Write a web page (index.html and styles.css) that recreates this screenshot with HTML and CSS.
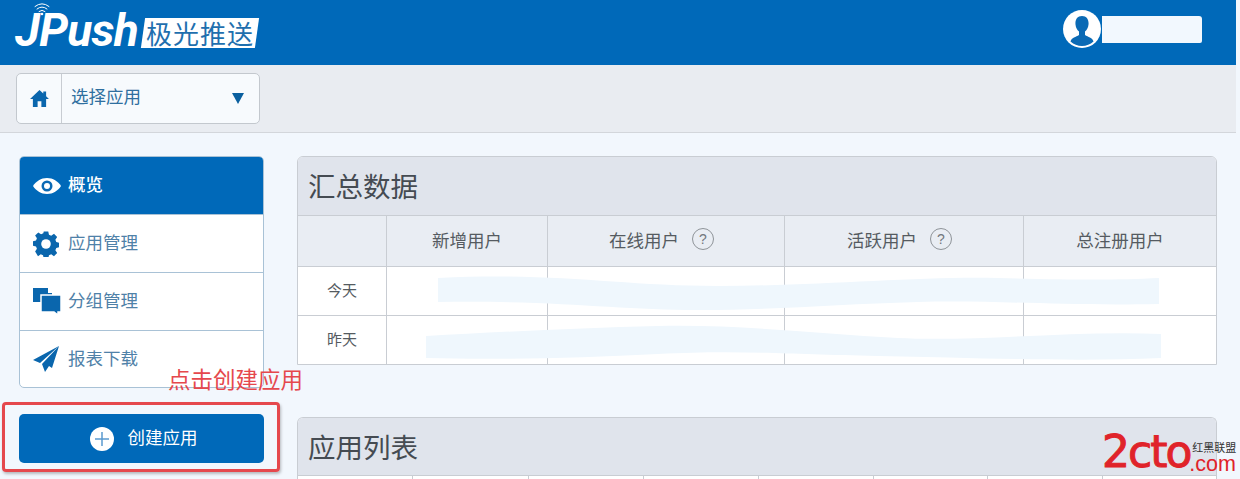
FILE: index.html
```html
<!DOCTYPE html>
<html lang="zh">
<head>
<meta charset="utf-8">
<title>JPush 极光推送</title>
<link rel="stylesheet" href="styles.css">
</head>
<body>
<div class="page">
  <header class="topbar">
    <div class="logo">
      <svg class="wifi" viewBox="0 0 18 14" width="18" height="14"><g fill="none" stroke="#fff" stroke-width="1" stroke-linecap="round"><path d="M2 4.500Q9 -1 16 4.500"/><path d="M4 7Q9 3 14 7"/><path d="M6 9.500Q9 7 12 9.500"/></g><circle cx="9" cy="12" r="1.300" fill="#fff"/></svg>
      <span class="logo-word">JPush</span>
      <span class="logo-badge"><span class="logo-cn">极光推送</span></span>
    </div>
    <div class="user">
      <svg class="avatar" viewBox="0 0 38 38" width="38" height="38"><circle cx="19" cy="19" r="19" fill="#fff"/><path d="M19 6c-5 0-7 4-6.500 8.500.3 3 1.500 5.500 3.500 7v3.500c-3 2-7.500 2.500-8.500 6.500a17 17 0 0 0 23 0c-1-4-5.500-4.500-8.500-6.500V21.500c2-1.500 3.200-4 3.500-7C26 10 24 6 19 6z" fill="#0a6ab5"/></svg>
      <div class="user-mask"></div>
    </div>
  </header>

  <div class="subbar">
    <div class="picker">
      <span class="picker-home">
        <svg viewBox="0 0 20 18" width="19" height="17"><path d="M10 0 0 9.500h3V18h5v-6h4v6h5V9.500h3l-3-2.900V1.500h-3v2.200z" fill="#0a66ad"/></svg>
      </span>
      <span class="picker-label">选择应用</span>
      <span class="picker-caret"></span>
    </div>
  </div>

  <div class="content">
    <aside class="side">
      <nav class="nav">
        <a class="nav-item is-active">
          <span class="nav-icon"><svg viewBox="0 0 28 18" width="28" height="18"><path d="M14 1C8 1 3 4.500 0 9c3 4.500 8 8 14 8s11-3.500 14-8c-3-4.500-8-8-14-8z" fill="#fff"/><circle cx="14" cy="9" r="5.500" fill="#0a69b4"/><circle cx="14" cy="9" r="3" fill="#fff"/></svg></span>
          <span>概览</span>
        </a>
        <a class="nav-item">
          <span class="nav-icon"><svg viewBox="0 0 26 26" width="26" height="26"><path d="M10.500 0h5l.8 3.600 2.500 1 3.100-2 3.500 3.500-2 3.100 1 2.500 3.600.8v5l-3.600.8-1 2.500 2 3.100-3.500 3.500-3.100-2-2.500 1-.8 3.600h-5l-.8-3.600-2.500-1-3.100 2L.9 22.200l2-3.100-1-2.500L-1.700 15.800v-5l3.600-.8 1-2.500-2-3.100L4.400 1l3.100 2 2.500-1z" transform="translate(1.300 .5) scale(.9)" fill="#0a66ad"/><circle cx="13" cy="13" r="4.800" fill="#fff"/></svg></span>
          <span>应用管理</span>
        </a>
        <a class="nav-item">
          <span class="nav-icon"><svg viewBox="0 0 28 27" width="28" height="27"><path d="M0 0h15v5h4v9H0z" fill="#0a66ad"/><path d="M8 7h20v17h-3v3l-4-3H8z" fill="#0a66ad" stroke="#fff" stroke-width="1.500"/></svg></span>
          <span>分组管理</span>
        </a>
        <a class="nav-item">
          <span class="nav-icon"><svg viewBox="0 0 26 26" width="26" height="26"><path d="M26 0 0 14l7 3zM26 0 9 18l3 8 4-6 3 2z" fill="#0a66ad"/></svg></span>
          <span>报表下载</span>
        </a>
      </nav>
      <a class="create">
        <svg viewBox="0 0 24 24" width="24" height="24"><circle cx="12" cy="12" r="12" fill="#fff"/><path d="M12 5v14M5 12h14" stroke="#5b9bd0" stroke-width="1.500"/></svg>
        <span>创建应用</span>
      </a>
    </aside>

    <main class="main">
      <section class="panel panel-summary">
        <h2 class="panel-title">汇总数据</h2>
        <div class="grid grid-summary grid-head">
          <div class="cell"></div>
          <div class="cell">新增用户</div>
          <div class="cell">在线用户<span class="help">?</span></div>
          <div class="cell">活跃用户<span class="help">?</span></div>
          <div class="cell">总注册用户</div>
        </div>
        <div class="grid grid-summary grid-row">
          <div class="cell">今天</div><div class="cell"></div><div class="cell"></div><div class="cell"></div><div class="cell"></div>
        </div>
        <div class="grid grid-summary grid-row">
          <div class="cell">昨天</div><div class="cell"></div><div class="cell"></div><div class="cell"></div><div class="cell"></div>
        </div>
        <svg class="blot" viewBox="0 0 920 120" width="920" height="120"><path d="M140 12C260 6 320 20 420 20S620 10 700 12 820 14 861 12V38C760 40 700 34 620 36S480 44 400 44 260 34 140 36Z" fill="#eff7fd"/><path d="M128 70C200 66 280 62 360 60S520 68 600 72 780 64 863 68V92C780 96 680 92 580 90S440 84 360 88 200 94 128 92Z" fill="#eff7fd"/></svg>
      </section>

      <section class="panel panel-apps">
        <h2 class="panel-title">应用列表</h2>
        <div class="grid grid-apps grid-head">
          <div class="cell"></div><div class="cell"></div><div class="cell"></div><div class="cell"></div><div class="cell"></div><div class="cell"></div><div class="cell"></div><div class="cell"></div>
        </div>
      </section>
    </main>
  </div>

  <div class="note">点击创建应用</div>
  <div class="note-box"></div>
  <div class="mark">
    <span class="mark-word">2cto</span>
    <span class="mark-side"><span class="mark-cn">红黑联盟</span><span class="mark-com">.com</span></span>
  </div>
</div>
</body>
</html>
```
FILE: styles.css
```css
* { box-sizing: border-box; }
html, body { margin: 0; height: 479px; overflow: hidden; }
body {
  background: #f2f7fd;
  font-family: "Noto Sans CJK SC", "Liberation Sans", sans-serif;
}
.page { position: relative; width: 1240px; height: 479px; overflow: hidden; }

.topbar {
  width: 1236px;
  height: 65px;
  background: #0069b9;
  display: flex;
  align-items: center;
  justify-content: space-between;
  padding: 0 34px 0 15px;
}
.logo { position: relative; display: flex; align-items: center; height: 65px; }
.wifi { position: absolute; left: 18px; top: 2px; }
.logo-word {
  font: italic 700 46px/50px Roboto, "Liberation Sans", sans-serif;
  color: #fff;
  letter-spacing: -.7px;
  margin-top: -6px;
}
.logo-badge {
  margin-left: 5px;
  margin-top: 1px;
  width: 114px;
  height: 30px;
  background: #fff;
  transform: skewX(-8deg);
  display: flex;
  align-items: center;
  justify-content: center;
}
.logo-cn {
  transform: skewX(8deg);
  color: #1f6fae;
  font-size: 26px;
  line-height: 30px;
  letter-spacing: 1px;
  white-space: nowrap;
}
.user { display: flex; align-items: center; margin-top: -7px; }
.avatar { display: block; margin-right: 1px; }
.user-mask { width: 100px; height: 27px; background: #f2f8fe; border-radius: 0 3px 2px 0; }

.subbar {
  width: 1236px;
  height: 68px;
  padding: 8px 16px 0;
  background: #e9ecf1;
  border-bottom: 1px solid #d3d6db;
}
.picker {
  width: 244px;
  height: 51px;
  display: flex;
  align-items: center;
  background: #f7fafd;
  border: 1px solid #c3c8ce;
  border-radius: 5px;
}
.picker-home {
  width: 45px;
  height: 100%;
  display: flex;
  align-items: center;
  justify-content: center;
  border-right: 1px solid #c8ccd2;
}
.picker-label { margin-left: 9px; padding-bottom: 6px; font-size: 17.500px; color: #2f6f9f; flex: 1; }
.picker-caret {
  margin-right: 15px;
  width: 0;
  height: 0;
  border-left: 6.500px solid transparent;
  border-right: 6.500px solid transparent;
  border-top: 11px solid #0a5f9f;
}

.content { display: flex; padding: 23px 0 0 19px; gap: 33px; }
.side { width: 245px; flex: none; }
.nav {
  background: #fff;
  border: 1px solid #a9c2d6;
  border-radius: 5px;
  overflow: hidden;
}
.nav-item {
  height: 58px;
  display: flex;
  align-items: center;
  padding: 0 0 4px 13px;
  border-top: 1px solid #a9c2d6;
  color: #4f81a8;
  font-size: 17.500px;
}
.nav-icon { width: 35px; flex: none; display: flex; margin-top: 4px; }
.nav-item:first-child { border-top: 0; height: 57px; }
.is-active { background: #0069b9; color: #fff; font-weight: 500; }
.nav-item:last-child { height: 57px; }
.create {
  margin-top: 26px;
  height: 49px;
  padding-left: 4px;
  background: #0069b9;
  border-radius: 5px;
  color: #fff;
  font-size: 17.500px;
  display: flex;
  align-items: center;
  justify-content: center;
  gap: 14px;
}
.create span { padding-bottom: 4px; }

.main { width: 920px; flex: none; display: flex; flex-direction: column; gap: 52px; }
.panel {
  position: relative;
  background: #fff;
  border: 1px solid #c9cdd3;
  border-radius: 6px 6px 0 0;
}
.panel-title {
  margin: 0;
  height: 59px;
  padding-left: 10px;
  background: #e0e4ec;
  border-bottom: 1px solid #c9cdd3;
  border-radius: 5px 5px 0 0;
  font-size: 27.500px;
  font-weight: 400;
  line-height: 56px;
  color: #454b52;
}
.grid { display: grid; }
.grid-summary { grid-template-columns: 88px 161px 237px 239px 1fr; }
.grid-apps { grid-template-columns: 114px 116px 115px 115px 115px 114px 115px 1fr; }
.grid-head { height: 51px; background: #e9edf3; border-bottom: 1px solid #c9cdd3; }
.grid-head .cell { padding-bottom: 4px; }
.grid-row { height: 49px; border-bottom: 1px solid #c9cdd3; font-size: 15px; }
.grid-row .cell { padding-bottom: 3px; }
.grid-row:last-of-type { border-bottom: 0; height: 48px; }
.cell {
  display: flex;
  align-items: center;
  justify-content: center;
  border-left: 1px solid #c9cdd3;
  color: #555b61;
}
.cell:first-child { border-left: 0; }
.grid-head .cell { font-size: 17.500px; }
.help {
  margin: 0 9px 0 13px;
  width: 22px;
  height: 22px;
  border: 1px solid #8f9499;
  border-radius: 50%;
  display: flex;
  align-items: center;
  justify-content: center;
  font: 14px/1 "Liberation Sans", sans-serif;
  color: #73787d;
}
.blot { position: absolute; left: 0; top: 109px; }
.panel-apps { border-bottom: 0; }
.panel-apps .panel-title { height: 58px; }
.panel-apps .grid-head { height: 3px; background: #fff; border-bottom: 0; }
.panel-apps .grid-head .cell { padding: 0; }

.note {
  position: absolute;
  left: 168px;
  top: 363px;
  font-size: 22.500px;
  line-height: 30px;
  color: #e5484d;
  white-space: nowrap;
}
.note-box {
  position: absolute;
  left: 2px;
  top: 402px;
  width: 278px;
  height: 70px;
  border: 3px solid #e5484d;
  border-radius: 4px;
  box-shadow: 1px 2px 3px rgba(0, 0, 0, .25);
}
.mark {
  position: absolute;
  left: 1102px;
  top: 426px;
  display: flex;
  align-items: flex-end;
  height: 48px;
  white-space: nowrap;
}
.mark-word {
  font: 400 44px/48px "DejaVu Sans", sans-serif;
  -webkit-text-stroke: 1px #e0232a;
  color: #e0232a;
  letter-spacing: -2px;
  margin-bottom: -2px;
}
.mark-side { display: flex; flex-direction: column; align-items: flex-start; margin-left: 2px; }
.mark-cn { font-size: 11px; line-height: 13px; color: #333; }
.mark-com { font: 400 21.500px/20px "Liberation Sans", sans-serif; color: #e0232a; margin-left: -3px; }
```
